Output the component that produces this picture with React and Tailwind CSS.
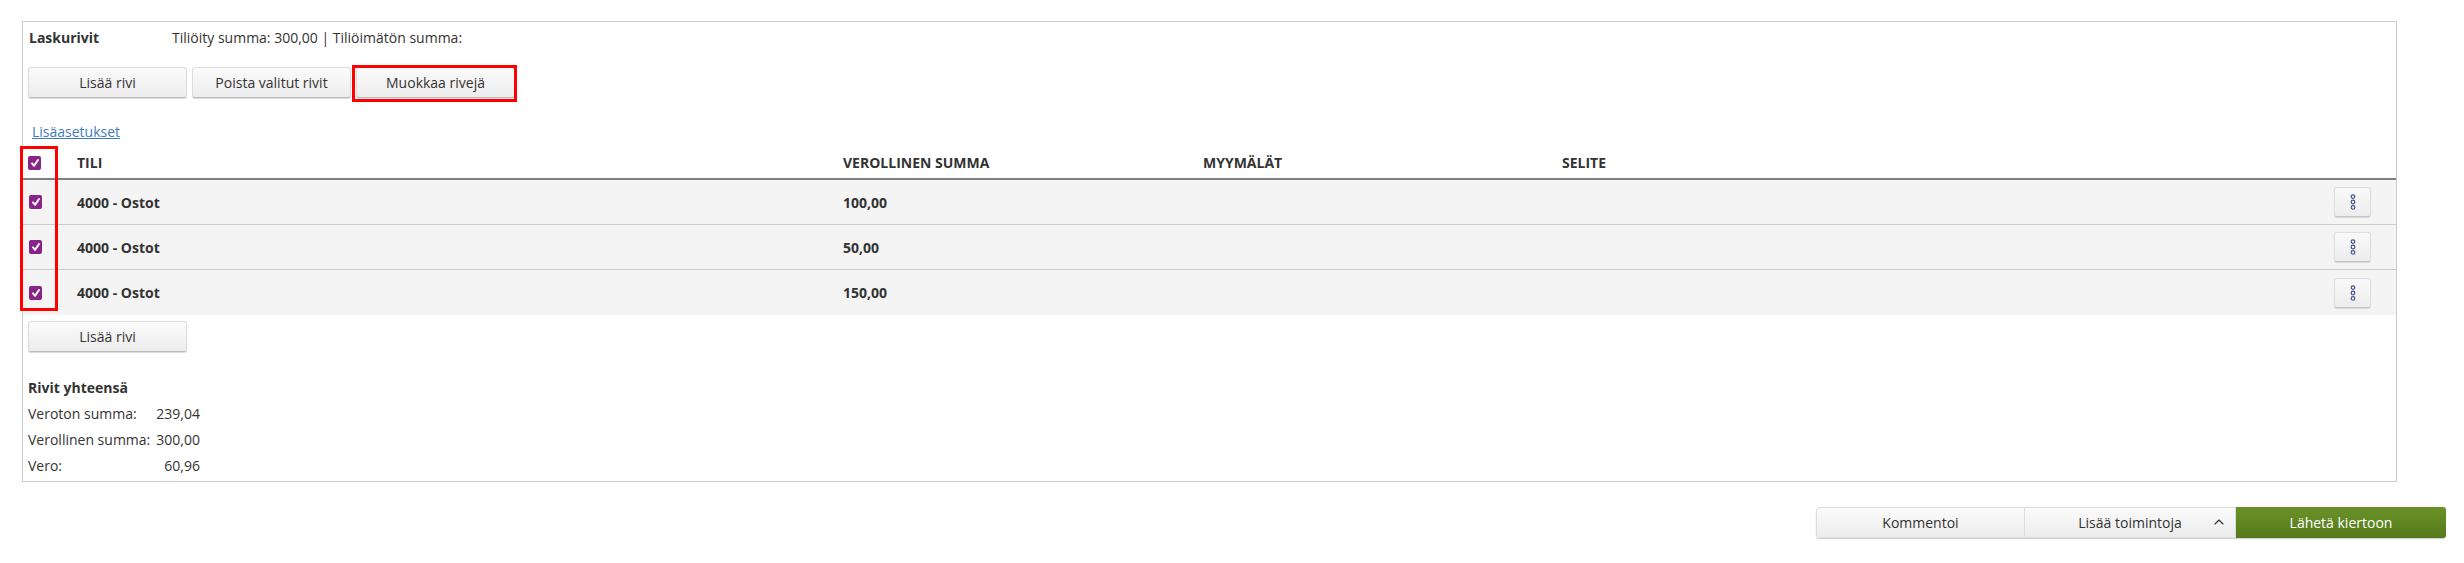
import { ChevronUp } from "lucide-react";

const rows = [
  { account: "4000 - Ostot", amount: "100,00" },
  { account: "4000 - Ostot", amount: "50,00" },
  { account: "4000 - Ostot", amount: "150,00" },
];

const totals = [
  { label: "Veroton summa:", value: "239,04" },
  { label: "Verollinen summa:", value: "300,00" },
  { label: "Vero:", value: "60,96" },
];

function Button({ children }) {
  return (
    <button className="h-[31px] w-[159px] rounded-[3px] border border-[#dcdcdc] border-b-[#bcbcbc] bg-gradient-to-b from-[#fbfbfb] to-[#ececec] text-[14px] text-[#333] shadow-[0_1px_1px_rgba(0,0,0,0.15)]">
      {children}
    </button>
  );
}

function Checkbox() {
  return (
    <span className="flex h-[14px] w-[13px] items-center justify-center rounded-[2px] bg-[#8b2488]">
      <svg width="10" height="10" viewBox="0 0 10 10" fill="none" stroke="white" strokeWidth="2" strokeLinecap="round" strokeLinejoin="round">
        <path d="M2 5.4 L4.1 7.8 L8 2" />
      </svg>
    </span>
  );
}

function MenuButton() {
  return (
    <button className="flex h-[30px] w-[37px] items-center justify-center rounded-[3px] border border-[#dedede] border-b-[#c4c4c4] bg-gradient-to-b from-[#f9f9f9] to-[#ededed] shadow-[0_1px_1px_rgba(0,0,0,0.12)]">
      <svg width="6" height="16" viewBox="0 0 6 16" fill="none" stroke="#46568f" strokeWidth="1.2">
        <circle cx="3" cy="2.6" r="1.8" />
        <circle cx="3" cy="8" r="1.8" />
        <circle cx="3" cy="13.4" r="1.8" />
      </svg>
    </button>
  );
}

export default function App() {
  return (
    <div className="min-h-[563px] bg-white pt-[21px] font-['Open_Sans',sans-serif] text-[14px] text-[#333]">
      {/* Panel */}
      <div className="ml-[22px] h-[461px] w-[2375px] border border-[#cccccc]">
        <div className="flex h-[30px] items-center pl-[6px]">
          <span className="w-[143px] font-bold">Laskurivit</span>
          <span>Tiliöity summa: 300,00 | Tiliöimätön summa:</span>
        </div>

        <div className="mt-[15px] flex gap-[5px] pl-[5px]">
          <Button>Lisää rivi</Button>
          <Button>Poista valitut rivit</Button>
          <div className="relative">
            <Button>Muokkaa rivejä</Button>
            <div className="absolute -left-[4px] -top-[2px] h-[37px] w-[165px] border-[3px] border-[#ff0000]" />
          </div>
        </div>

        <div className="mt-[24px] pl-[9px] leading-[20px]">
          <a className="text-[#3f7cbf] underline">Lisäasetukset</a>
        </div>

        {/* Table */}
        <div className="relative mt-[4px]">
          <div className="flex h-[34px] items-center border-b-2 border-[#808080] pt-[1px] font-bold">
            <div className="w-[54px] pl-[5px]">
              <Checkbox />
            </div>
            <div className="w-[766px]">TILI</div>
            <div className="w-[360px]">VEROLLINEN SUMMA</div>
            <div className="w-[359px]">MYYMÄLÄT</div>
            <div>SELITE</div>
          </div>
          {rows.map((row, idx) => (
            <div
              key={idx}
              className={`flex h-[45px] items-center bg-[#f4f4f4] font-bold ${idx < rows.length - 1 ? "border-b border-[#cccccc]" : ""}`}
            >
              <div className="w-[54px] pl-[6px]">
                <Checkbox />
              </div>
              <div className="w-[766px]">{row.account}</div>
              <div className="w-[360px]">{row.amount}</div>
              <div className="flex-1" />
              <div className="pr-[25px]">
                <MenuButton />
              </div>
            </div>
          ))}
          <div className="absolute -left-[3px] top-0 h-[165px] w-[38px] border-[3px] border-[#ff0000]" />
        </div>

        <div className="mt-[6px] pl-[5px]">
          <Button>Lisää rivi</Button>
        </div>

        <div className="mt-[26px] pl-[5px] font-bold leading-[20px]">Rivit yhteensä</div>
        <div className="mt-[3px] w-[177px] pl-[5px] leading-[26px]">
          {totals.map((total) => (
            <div key={total.label} className="flex justify-between">
              <span>{total.label}</span>
              <span>{total.value}</span>
            </div>
          ))}
        </div>
      </div>

      {/* Actions */}
      <div className="mt-[25px] flex justify-end pr-[18px]">
        <div className="flex h-[31px] w-[630px] overflow-hidden rounded-[3px] shadow-[0_1px_1px_rgba(0,0,0,0.2)]">
          <button className="w-[209px] rounded-l-[3px] border border-[#dcdcdc] bg-gradient-to-b from-[#fbfbfb] to-[#ececec] pb-[1px]">
            Kommentoi
          </button>
          <button className="relative w-[211px] border-y border-r border-[#dcdcdc] bg-gradient-to-b from-[#fbfbfb] to-[#ececec]">
            Lisää toimintoja
            <ChevronUp className="absolute right-[8px] top-[6px] h-[16px] w-[16px]" strokeWidth={1.75} />
          </button>
          <button className="flex-1 bg-gradient-to-b from-[#6a9227] to-[#557a1c] pb-[1px] text-white">
            Lähetä kiertoon
          </button>
        </div>
      </div>
    </div>
  );
}
